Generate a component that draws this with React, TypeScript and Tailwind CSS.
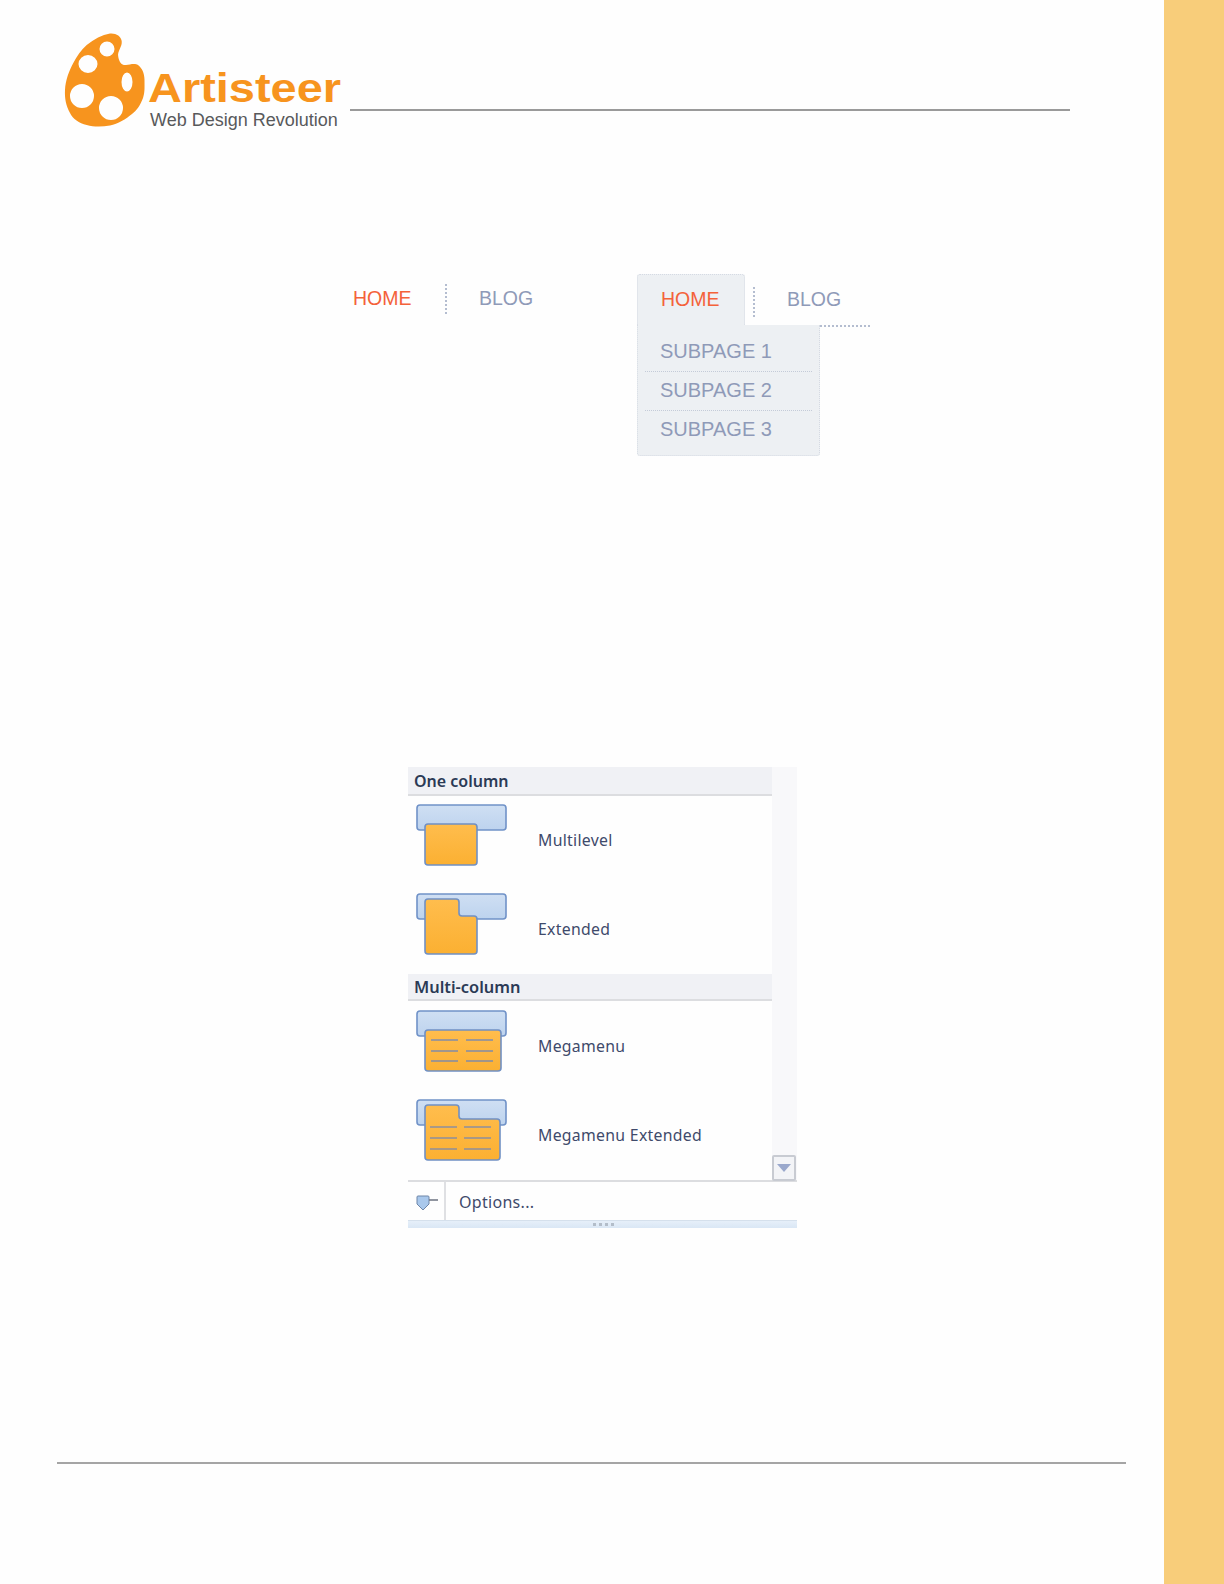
function Logo() {
  return (
    <svg width="82" height="94" viewBox="0 0 82 94" className="shrink-0">
      <path
        fillRule="evenodd"
        fill="#f7941e"
        d="M46 0.5 C52 0 57 3 57.7 8 C58.5 14 53 18 54.3 24 C55.5 30 58 32.5 62 32 C66 31.5 71 30 74 32 C78 35 80.5 40 80.5 47 C80.5 54 81 59 79 65 C76 73 73 77 68 81 C62 86 54 91 46 92.5 C38 93.8 30 94 22.7 92 C15 90 9 86 6 80 C2 73 0.5 65 1 57 C1.5 47 5 38 9.3 30 C13 23 17 17 22.7 12 C30 6 38 2 46 0.5 Z
           M35.5 16 a7.5 7.5 0 1 0 15 0 a7.5 7.5 0 1 0 -15 0 Z
           M14.5 31 a9.5 9 0 1 0 19 0 a9.5 9 0 1 0 -19 0 Z
           M57.5 49 a5.5 9.5 0 1 0 11 0 a5.5 9.5 0 1 0 -11 0 Z
           M6 63 a12 12 0 1 0 24 0 a12 12 0 1 0 -24 0 Z
           M35 75 a12 12 0 1 0 24 0 a12 12 0 1 0 -24 0 Z"
      />
    </svg>
  );
}

function MenuIcon({ kind }: { kind: "multi" | "ext" | "mega" | "megaext" }) {
  const blue = (
    <rect x="1" y="1" width="89" height="25" rx="3" fill="url(#bl)" stroke="#7092c8" strokeWidth="1.6" />
  );
  const linesA = [0, 11, 21].map((y) => (
    <g key={y} stroke="#6f86b8" strokeWidth="1.3">
      <line x1="15" x2="42" y1={30 + y} y2={30 + y} />
      <line x1="50" x2="77" y1={30 + y} y2={30 + y} />
    </g>
  ));
  const linesB = [0, 11, 22].map((y) => (
    <g key={y} stroke="#7b89ad" strokeWidth="1.3">
      <line x1="14" x2="41" y1={28 + y} y2={28 + y} />
      <line x1="48" x2="75" y1={28 + y} y2={28 + y} />
    </g>
  ));
  return (
    <svg width="92" height="64" viewBox="0 0 92 64" className="shrink-0">
      <defs>
        <linearGradient id="bl" x1="0" y1="0" x2="0" y2="1">
          <stop offset="0" stopColor="#cfdff3" />
          <stop offset="1" stopColor="#bdd3ee" />
        </linearGradient>
        <linearGradient id="or" x1="0" y1="0" x2="0" y2="1">
          <stop offset="0" stopColor="#ffbd4d" />
          <stop offset="1" stopColor="#fbb032" />
        </linearGradient>
      </defs>
      {blue}
      {kind === "multi" && (
        <rect x="9" y="20" width="52" height="41" rx="3" fill="url(#or)" stroke="#7090c4" strokeWidth="1.6" />
      )}
      {kind === "ext" && (
        <path
          d="M12 6 H40 Q43 6 43 9 V20 Q43 23 46 23 H58 Q61 23 61 26 V58 Q61 61 58 61 H12 Q9 61 9 58 V9 Q9 6 12 6 Z"
          fill="url(#or)"
          stroke="#7090c4"
          strokeWidth="1.6"
        />
      )}
      {kind === "mega" && (
        <>
          <rect x="9" y="20" width="76" height="41" rx="3" fill="url(#or)" stroke="#7090c4" strokeWidth="1.6" />
          {linesA}
        </>
      )}
      {kind === "megaext" && (
        <>
          <path
            d="M12 6 H40 Q43 6 43 9 V17 Q43 20 46 20 H81 Q84 20 84 23 V58 Q84 61 81 61 H12 Q9 61 9 58 V9 Q9 6 12 6 Z"
            fill="url(#or)"
            stroke="#7090c4"
            strokeWidth="1.6"
          />
          {linesB}
        </>
      )}
    </svg>
  );
}

function GroupHeader({ children, h, size }: { children: string; h: string; size: string }) {
  return (
    <div className={`${h} ${size} bg-[#f0f1f5] border-b-2 border-[#dcdde0] pl-[6px] pt-[1px] flex items-center font-semibold text-[#2b3a55]`}>
      {children}
    </div>
  );
}

function Row({ kind, label, h, pt }: { kind: "multi" | "ext" | "mega" | "megaext"; label: string; h: string; pt: string }) {
  return (
    <div className={`${h} ${pt} flex items-start pl-[8px]`}>
      <MenuIcon kind={kind} />
      <span className="ml-[30px] mt-[26px] text-[15.8px] leading-[20px] tracking-[0.3px] text-[#3f4a6b]">{label}</span>
    </div>
  );
}

export default function App() {
  return (
    <div
      className="w-[1224px] h-[1584px] flex bg-[#fefefe] overflow-hidden"
      style={{ fontFamily: '"Liberation Sans", Arial, sans-serif' }}
    >
      <main className="w-[1164px] shrink-0 flex flex-col">
        <header className="h-[133px] flex items-start">
          <div className="ml-[64px] mt-[33px]">
            <Logo />
          </div>
          <div className="ml-[2px] mt-[65px] w-[200px] shrink-0">
            <div className="text-[41px] leading-[46px] font-bold text-[#f7941e] whitespace-nowrap origin-left scale-x-[1.145]">Artisteer</div>
            <div className="ml-[2px] text-[18px] leading-[20px] text-[#58595b] whitespace-nowrap mt-[-1px]">Web Design Revolution</div>
          </div>
          <div className="ml-[2px] mt-[109px] w-[720px] h-[2px] bg-[#9a9a9a]" />
        </header>

        <section className="h-[330px] flex items-start pt-[141px]">
          <div className="ml-[353px] w-[284px] flex items-center h-[30px] mt-[10px] text-[19.5px] shrink-0">
            <span className="text-[#f4623a] w-[92px]">HOME</span>
            <span className="h-[30px] border-l-2 border-dotted border-[#b4bdd0]" />
            <span className="ml-[32px] text-[#8f9ab8]">BLOG</span>
          </div>
          <div className="relative w-[240px] shrink-0 text-[19.5px]">
            <div className="flex h-[51px]">
              <div className="w-[108px] bg-[#edf0f3] rounded-t-[3px] border-t border-x border-dotted border-[#d5dae3] pl-[23px] pt-[10px] text-[#f4623a]">HOME</div>
              <div className="ml-[8px] mt-[13px] h-[30px] border-l-2 border-dotted border-[#b4bdd0]" />
              <div className="ml-[32px] mt-[11px] text-[#8f9ab8]">BLOG</div>
            </div>
            <div className="w-[183px] h-[131px] bg-[#edf0f3] rounded-b-[3px] border-b border-x border-dotted border-[#d5dae3] px-[7px] pt-[8px] text-[20px] text-[#8f9ab8]">
              <div className="h-[39px] pl-[15px] pt-[3px] border-b border-dotted border-[#c4cbd8]">SUBPAGE 1</div>
              <div className="h-[39px] pl-[15px] pt-[3px] border-b border-dotted border-[#c4cbd8]">SUBPAGE 2</div>
              <div className="h-[39px] pl-[15px] pt-[3px]">SUBPAGE 3</div>
            </div>
            <div className="absolute left-[183px] top-[51px] w-[50px] border-t-2 border-dotted border-[#b4bdd0]" />
          </div>
        </section>

        <section
          className="ml-[408px] mt-[304px] w-[389px] h-[461px] flex flex-col"
          style={{ fontFamily: '"Noto Sans", "Open Sans", sans-serif' }}
        >
          <div className="h-[413px] flex">
            <div className="w-[364px] shrink-0 flex flex-col">
              <GroupHeader h="h-[29px]" size="text-[16px]">One column</GroupHeader>
              <Row kind="multi" label="Multilevel" h="h-[89px]" pt="pt-[8px]" />
              <Row kind="ext" label="Extended" h="h-[89px]" pt="pt-[8px]" />
              <GroupHeader h="h-[27px]" size="text-[16.4px]">Multi-column</GroupHeader>
              <Row kind="mega" label="Megamenu" h="h-[89px]" pt="pt-[9px]" />
              <Row kind="megaext" label="Megamenu Extended" h="h-[90px]" pt="pt-[9px]" />
            </div>
            <div className="flex-1 bg-[#f8f8fa] flex flex-col justify-end">
              <div className="relative w-[24px] h-[26px] mb-[-1px] border-2 border-[#c8cbd2] rounded-[2px] bg-[#f3f4f7] flex items-center justify-center">
                <svg width="14" height="8" viewBox="0 0 14 8">
                  <path d="M0 0 H14 L7 8 Z" fill="#9aa8cc" />
                </svg>
              </div>
            </div>
          </div>
          <div className="h-[40px] border-t-2 border-[#dcdde0] flex items-center">
            <div className="w-[38px] h-[38px] pt-[3px] border-r-2 border-[#dfe0e3] flex items-center justify-center shrink-0">
              <svg width="24" height="16" viewBox="0 0 24 16">
                <path d="M3 2 Q3 1 4 1 H14 Q15 1 15 2 V9 L9 15 L3 9 Z" fill="#a9c8ec" stroke="#6f86a8" strokeWidth="1" />
                <line x1="15" x2="24" y1="5" y2="5" stroke="#6b7280" strokeWidth="1.5" />
              </svg>
            </div>
            <span className="ml-[13px] pt-[1px] text-[16px] tracking-[0.3px] text-[#3f4a6b]">Options...</span>
          </div>
          <div className="h-[8px] bg-gradient-to-b from-[#e6eff9] to-[#dae7f5] border-t border-[#d5e0ec] flex items-center justify-center">
            <span className="ml-[2px] flex gap-[3px]">
              {[0, 1, 2, 3].map((i) => (
                <span key={i} className="w-[3px] h-[3px] bg-[#b3bdc9]" />
              ))}
            </span>
          </div>
        </section>

        <div className="ml-[57px] mt-[234px] w-[1069px] h-[2px] bg-[#a5a5a5]" />
      </main>
      <aside className="w-[60px] shrink-0 bg-[#f8cd7a]" />
    </div>
  );
}
